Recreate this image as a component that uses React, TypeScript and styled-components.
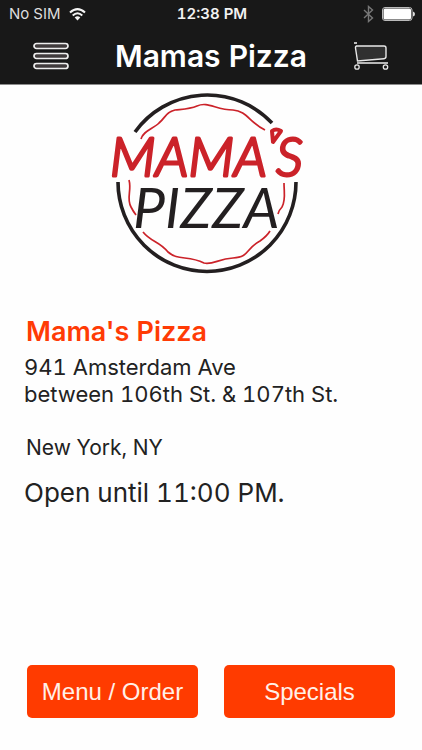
import React from "react";
import styled, { createGlobalStyle } from "styled-components";

const GlobalStyle = createGlobalStyle`
  * { box-sizing: border-box; }
  html, body, #root { height: 100%; }
  body {
    margin: 0;
    background: #fefefe;
    color: #222;
    font-family: Inter, "Liberation Sans", sans-serif;
    font-variant-numeric: tabular-nums;
  }
`;

const Screen = styled.div`
  min-height: 100%;
  display: flex;
  flex-direction: column;
`;

const Header = styled.header`
  background: #181818;
  color: #fff;
  border-bottom: 1px solid #8c8c8c;
`;

const StatusBar = styled.div`
  display: grid;
  grid-template-columns: 1fr auto 1fr;
  align-items: center;
  height: 28px;
  padding: 0 7px 0 9px;
  font-size: 15px;
  line-height: 20px;
`;

const StatusGroup = styled.div<{ $end?: boolean }>`
  display: flex;
  align-items: center;
  gap: 8px;
  justify-content: ${(p) => (p.$end ? "flex-end" : "flex-start")};
  color: #dedede;
`;

const Clock = styled.time`
  font-weight: 600;
  color: #f2f2f2;
`;

const NavBar = styled.nav`
  display: flex;
  align-items: center;
  justify-content: space-between;
  height: 56px;
  padding: 0 30px;
`;

const IconButton = styled.button`
  display: flex;
  align-items: center;
  justify-content: center;
  width: 42px;
  height: 42px;
  padding: 0;
  border: 0;
  background: none;
`;

const Title = styled.h1`
  margin: 0;
  font-size: 30px;
  line-height: 40px;
  font-weight: 600;
  white-space: nowrap;
`;

const Main = styled.main`
  flex: 1;
  display: flex;
  flex-direction: column;
`;

const LogoArea = styled.div`
  display: flex;
  justify-content: center;
  padding-top: 5px;
  padding-right: 8px;
`;

const LogoText = styled.text<{ $red?: boolean }>`
  font-family: Lato, sans-serif;
  font-style: italic;
  font-size: ${(p) => (p.$red ? 54 : 57)}px;
  font-weight: ${(p) => (p.$red ? 300 : 400)};
  fill: ${(p) => (p.$red ? "#cb2229" : "#231f20")};
  stroke: ${(p) => (p.$red ? "#cb2229" : "none")};
  stroke-width: 3;
  stroke-linejoin: round;
`;

const Details = styled.section`
  display: flex;
  flex-direction: column;
  padding: 38px 24px 0;
`;

const Name = styled.h2`
  margin: 0 0 4px 2px;
  color: #ff3b05;
  font-size: 27px;
  line-height: 36px;
  font-weight: 600;
`;

const Address = styled.address`
  font-style: normal;
  font-size: 22px;
  line-height: 27px;
`;

const City = styled.div`
  margin: 26px 0 0 2px;
  font-size: 21px;
`;

const Hours = styled.p`
  margin: 15px 0 0;
  font-size: 26px;
  line-height: 34px;
`;

const Actions = styled.div`
  display: grid;
  grid-template-columns: 1fr 1fr;
  gap: 26px;
  margin-top: auto;
  padding: 24px 27px 32px;
`;

const ActionButton = styled.button`
  height: 53px;
  padding: 0;
  border: 0;
  border-radius: 5px;
  background: #ff3b00;
  color: #fff0e8;
  font-family: "Liberation Sans", Arial, sans-serif;
  font-size: 24px;
  line-height: 28px;
`;

const WifiIcon = () => (
  <svg width="17" height="13" viewBox="0 0 17 13" fill="none" stroke="#f4f4f4" strokeWidth="2" aria-label="Wi-Fi">
    <path d="M1 4.6Q8.500-2.300 16 4.600M3.700 7.400Q8.500 3 13.300 7.400" />
    <path d="M8.500 12.500L5.700 9.500Q8.500 7.200 11.300 9.500Z" fill="#f4f4f4" stroke="none" />
  </svg>
);

const BluetoothIcon = () => (
  <svg width="11" height="18" viewBox="0 0 11 18" fill="none" stroke="#777" strokeWidth="1.400" aria-label="Bluetooth">
    <path d="M1 5L9.500 13L5.500 16.500V1.500L9.500 5L1 13" />
  </svg>
);

const BatteryIcon = () => (
  <svg width="33" height="14" viewBox="0 0 33 14" aria-label="Battery full">
    <rect x=".5" y=".5" width="29.500" height="13" rx="2.500" fill="none" stroke="#bbb" />
    <rect x="1.500" y="1.500" width="27.500" height="11" rx="1.500" fill="#fff" />
    <path d="M31 4.500Q33 5 33 7T31 9.500Z" fill="#ddd" />
  </svg>
);

const MenuIcon = () => (
  <svg width="36" height="28" viewBox="0 0 36 28" fill="#403b3c" stroke="#eee" strokeWidth="1.700">
    {[1.5, 11.5, 21.5].map((y) => (
      <rect key={y} x="1" y={y} width="34" height="5" rx="2.500" />
    ))}
  </svg>
);

const CartIcon = () => (
  <svg width="36" height="28" viewBox="0 0 36 28" fill="none" stroke="#e8e8e8">
    <path d="M1 1H4" strokeWidth="1.600" />
    <path d="M3 4H31Q33 4 33 6V14.500Q33 16.500 31 16.700L4.500 19L2.500 6Q2.300 4 4 4Z" fill="#303030" strokeWidth="1.400" />
    <path d="M4 21H35" stroke="#b8b8b8" strokeWidth="2" />
    <circle cx="4" cy="25" r="2.200" strokeWidth="1.300" />
    <circle cx="32.500" cy="25" r="2.200" strokeWidth="1.300" />
  </svg>
);

const Logo = () => (
  <svg width="200" height="186" viewBox="107 90 200 186" fill="none" role="img" aria-label="Mama's Pizza">
    <g stroke="#231f20" strokeWidth="3.600">
      <path d="M135 132A89 89 0 0 1 272 123" />
      <path d="M118 182A89 89.500 0 0 0 296 182" />
    </g>
    <g stroke="#cb2229" strokeWidth="1.700">
      <path d="M141 139C143 131 153 129 159 123C166 117 166 112 175 110C185 109 190 109 197 106C208 101 216 110 233 110C247 111 249 122 265 130" />
      <path d="M129 180C132 191 126 198 131 207Q133 211 136 215" />
      <path d="M143 232C151 242 159 241 168 252C178 261 188 255 204 263C213 265 218 259 233 258C250 257 245 249 260 241Q267 236 270 231" />
      <path d="M284 183C284 193 286 200 282 207Q279 210 278 214" />
    </g>
    <LogoText $red x="110" y="176">MAMA</LogoText>
    <LogoText $red x="276" y="176">S</LogoText>
    <path d="M272 131Q276 128 281 131L273 142Z" stroke="#cb2229" strokeWidth="4" strokeLinejoin="round" />
    <LogoText x="133" y="228">PIZZA</LogoText>
  </svg>
);

export default function App() {
  return (
    <Screen>
      <GlobalStyle />
      <Header>
        <StatusBar>
          <StatusGroup>
            <span>No SIM</span>
            <WifiIcon />
          </StatusGroup>
          <Clock>12:38 PM</Clock>
          <StatusGroup $end>
            <BluetoothIcon />
            <BatteryIcon />
          </StatusGroup>
        </StatusBar>
        <NavBar>
          <IconButton type="button" aria-label="Menu">
            <MenuIcon />
          </IconButton>
          <Title>Mamas Pizza</Title>
          <IconButton type="button" aria-label="Cart">
            <CartIcon />
          </IconButton>
        </NavBar>
      </Header>
      <Main>
        <LogoArea>
          <Logo />
        </LogoArea>
        <Details>
          <Name>Mama's Pizza</Name>
          <Address>
            941 Amsterdam Ave
            <br />
            between 106th St. &amp; 107th St.
            <City>New York, NY</City>
          </Address>
          <Hours>Open until 11:00 PM.</Hours>
        </Details>
        <Actions>
          <ActionButton type="button">Menu / Order</ActionButton>
          <ActionButton type="button">Specials</ActionButton>
        </Actions>
      </Main>
    </Screen>
  );
}
